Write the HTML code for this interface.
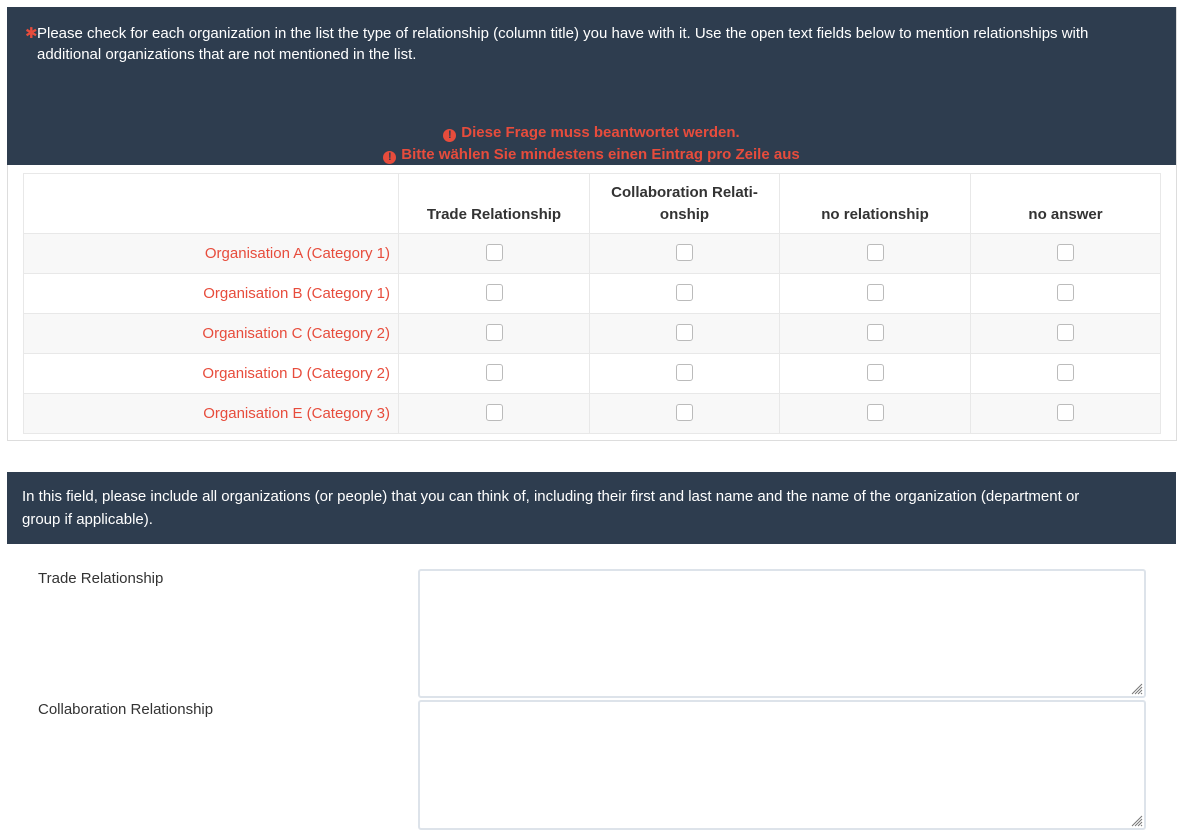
<!DOCTYPE html>
<html><head><meta charset="utf-8"><style>
body{margin:0;background:#fff;font-family:"Liberation Sans","DejaVu Sans",sans-serif;font-size:15px;color:#333;width:1179px;height:838px;overflow:hidden;position:relative}
.p1{position:absolute;left:7px;top:7px;width:1168px;height:433px;border:1px solid #ddd;border-top:none}
.h1{position:absolute;left:7px;top:7px;width:1169px;height:158px;background:#2e3d4f;color:#fff}
.h1 .q{position:absolute;left:30px;top:16px;width:1100px;line-height:21px}
.h1 .q b{color:#e74c3c;position:absolute;left:-12px;top:0}
.err{position:absolute;left:0;width:100%;text-align:center;color:#e74c3c;font-weight:bold;font-size:15px}
.ic{display:inline-block;width:13px;height:13px;border-radius:50%;background:#e74c3c;color:#2e3d4f;font-size:11px;line-height:13px;text-align:center;vertical-align:-1px;margin-right:5px}
table{position:absolute;left:23px;top:173px;border-collapse:collapse;width:1138px}
td,th{border:1px solid #e8e8e8;padding:0}
th{height:52px;font-weight:bold;font-size:15px;vertical-align:bottom;padding-bottom:7px;line-height:22px;text-align:center}
td{height:39px;text-align:center}
tr:nth-child(even) td{background:#f8f8f8}
td.l{text-align:right;color:#e74c3c;padding-right:8px}
.cb{display:inline-block;width:15px;height:15px;border:1px solid #bbb;border-radius:3px;background:#fff;vertical-align:middle;margin-top:-4px}
.h2{position:absolute;left:7px;top:472px;width:1169px;height:72px;background:#2e3d4f;color:#fff}
.h2 div{position:absolute;left:15px;top:13px;width:1080px;line-height:23px}
.lab{position:absolute;left:38px}
.ta{position:absolute;left:418px;width:724px;border:2px solid #dde3ea;border-radius:3px;background:#fff}
.ta svg{position:absolute;right:1px;bottom:1px}
</style></head><body>
<div class="p1"></div>
<div class="h1"><div class="q"><b>✱</b>Please check for each organization in the list the type of relationship (column title) you have with it. Use the open text fields below to mention relationships with additional organizations that are not mentioned in the list.</div>
<div class="err" style="top:117px"><span class="ic">!</span>Diese Frage muss beantwortet werden.</div>
<div class="err" style="top:139px"><span class="ic">!</span>Bitte wählen Sie mindestens einen Eintrag pro Zeile aus</div></div>
<table>
<tr><th style="width:374px"></th><th style="width:190px">Trade Relationship</th><th style="width:189px">Collaboration Relati-<br>onship</th><th style="width:190px">no relationship</th><th>no answer</th></tr>
<tr><td class="l">Organisation A (Category 1)</td><td><span class="cb"></span></td><td><span class="cb"></span></td><td><span class="cb"></span></td><td><span class="cb"></span></td></tr>
<tr><td class="l">Organisation B (Category 1)</td><td><span class="cb"></span></td><td><span class="cb"></span></td><td><span class="cb"></span></td><td><span class="cb"></span></td></tr>
<tr><td class="l">Organisation C (Category 2)</td><td><span class="cb"></span></td><td><span class="cb"></span></td><td><span class="cb"></span></td><td><span class="cb"></span></td></tr>
<tr><td class="l">Organisation D (Category 2)</td><td><span class="cb"></span></td><td><span class="cb"></span></td><td><span class="cb"></span></td><td><span class="cb"></span></td></tr>
<tr><td class="l">Organisation E (Category 3)</td><td><span class="cb"></span></td><td><span class="cb"></span></td><td><span class="cb"></span></td><td><span class="cb"></span></td></tr>
</table>
<div class="h2"><div>In this field, please include all organizations (or people) that you can think of, including their first and last name and the name of the organization (department or group if applicable).</div></div>
<div class="lab" style="top:570px">Trade Relationship</div>
<div class="ta" style="top:569px;height:125px"><svg width="12" height="12"><path d="M11 1L1 11M11 4L4 11M11 7L7 11M11 10L10 11" stroke="#777" stroke-width="1"/></svg></div>
<div class="lab" style="top:701px">Collaboration Relationship</div>
<div class="ta" style="top:700px;height:126px"><svg width="12" height="12"><path d="M11 1L1 11M11 4L4 11M11 7L7 11M11 10L10 11" stroke="#777" stroke-width="1"/></svg></div>
</body></html>
